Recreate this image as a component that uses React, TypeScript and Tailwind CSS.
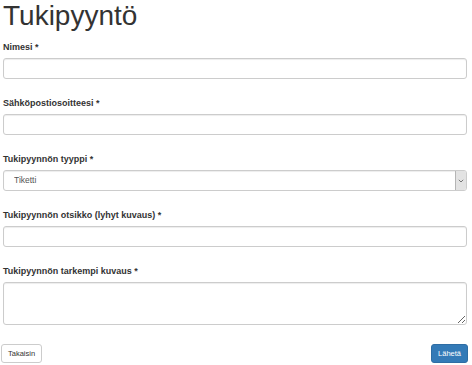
import { useState } from "react";

const labelCls = "block mb-[5px] text-[9px] leading-[12px] font-bold text-[#333]";
const inputCls =
  "block w-full h-[21px] px-[7px] rounded-[3px] border border-[#ccc] bg-white text-[8.5px] text-[#555] shadow-[inset_0_1px_1px_rgba(0,0,0,0.075)] outline-none";

const Field = ({ label, children }: { label: string; children: React.ReactNode }) => (
  <div className="mb-[18px]">
    <label className={labelCls}>{label}</label>
    {children}
  </div>
);

export default function App() {
  const [type, setType] = useState("tiketti");

  return (
    <div
      className="w-[472px] h-[365px] bg-white overflow-hidden"
      style={{ fontFamily: '"Liberation Sans", Arial, sans-serif' }}
    >
      <div className="pl-[3px] pr-[5px]">
        <h1 className="mb-[10px] text-[28px] leading-[31px] font-normal text-[#333]">Tukipyyntö</h1>

        <Field label="Nimesi *">
          <input type="text" className={inputCls} />
        </Field>

        <Field label="Sähköpostiosoitteesi *">
          <input type="email" className={inputCls} />
        </Field>

        <Field label="Tukipyynnön tyyppi *">
          <div className="flex h-[21px] rounded-[3px] border border-[#ccc] bg-white shadow-[inset_0_1px_1px_rgba(0,0,0,0.075)]">
            <select
              value={type}
              onChange={(e) => setType(e.target.value)}
              className="flex-1 min-w-0 appearance-none bg-transparent pl-[10px] text-[8.5px] text-[#555] outline-none"
            >
              <option value="tiketti">Tiketti</option>
              <option value="kysymys">Kysymys</option>
            </select>
            <span className="flex w-[11px] items-center justify-center border-l border-[#b5b5b5] bg-[#e3e3e3] rounded-r-[2px]">
              <svg width="6" height="4" viewBox="0 0 6 4" fill="none">
                <path d="M0.8 0.8 L3 3 L5.2 0.8" stroke="#777" strokeWidth="1" />
              </svg>
            </span>
          </div>
        </Field>

        <Field label="Tukipyynnön otsikko (lyhyt kuvaus) *">
          <input type="text" className={inputCls} />
        </Field>

        <div className="mb-[19px]">
          <label className={labelCls}>Tukipyynnön tarkempi kuvaus *</label>
          <textarea className={`${inputCls} h-[43px] py-[4px]`} />
        </div>
      </div>

      <div className="flex justify-between pl-[1px] pr-[4px]">
        <button className="h-[19px] px-[6px] rounded-[3px] border border-[#ccc] bg-white text-[7.5px] text-[#333]">
          Takaisin
        </button>
        <button className="h-[19px] px-[6px] rounded-[3px] border border-[#2e6da4] bg-[#337ab7] text-[7.5px] text-white">
          Lähetä
        </button>
      </div>
    </div>
  );
}
